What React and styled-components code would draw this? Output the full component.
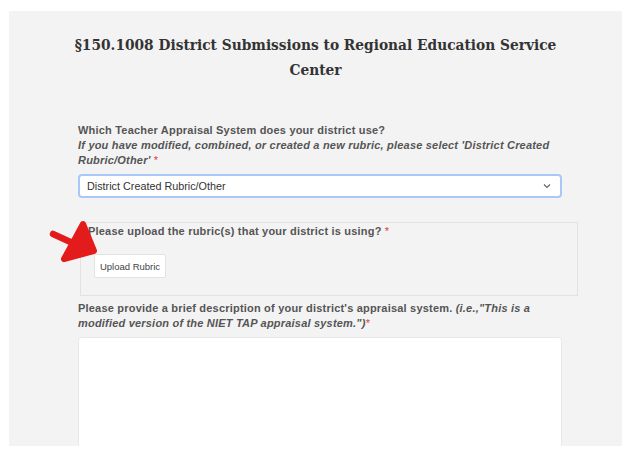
import React from 'react';
import styled, { createGlobalStyle } from 'styled-components';

const GlobalStyle = createGlobalStyle`
  body {
    margin: 0;
    background: #fff;
    font-family: "Liberation Sans", Arial, sans-serif;
  }
`;

const Panel = styled.div`
  margin: 11px 0 0 9px;
  width: 613px;
  height: 435px;
  background: #f3f3f3;
  box-sizing: border-box;
  padding-top: 22px;
  overflow: hidden;
`;

const Title = styled.h1`
  margin: 0 auto;
  width: 500px;
  font-family: "DejaVu Serif Condensed", "DejaVu Serif", serif;
  font-size: 15.3px;
  font-weight: bold;
  line-height: 25px;
  color: #333;
  text-align: center;
`;

const Form = styled.form`
  margin: 40px 0 0 69px;
  width: 484px;
  display: flex;
  flex-direction: column;
`;

const Label = styled.div`
  font-size: 11px;
  font-weight: bold;
  line-height: 15px;
  letter-spacing: 0.2px;
  color: #555;
`;

const Hint = styled.i`
  color: #555;
`;

const Req = styled.span`
  color: #e8363c;
  font-weight: normal;
`;

const SelectBox = styled.div`
  margin-top: 6px;
  height: 24px;
  box-sizing: border-box;
  border: 2px solid #a9c8f7;
  border-radius: 4px;
  background: #fff;
  display: flex;
  align-items: center;
  justify-content: space-between;
  padding: 0 9px 0 7px;
  font-size: 10.8px;
  color: #333;
`;

const UploadBox = styled.div`
  position: relative;
  margin: 24px 0 0 2px;
  width: 498px;
  height: 74px;
  box-sizing: border-box;
  border: 1px solid #e2e2e2;
  padding: 1px 7px;
`;

const UploadButton = styled.button`
  margin: 15px 0 0 6px;
  height: 24px;
  width: 72px;
  background: #fff;
  border: 1px solid #e3e3e3;
  border-radius: 2px;
  font-family: "Liberation Sans", Arial, sans-serif;
  font-size: 9.5px;
  color: #444;
  padding: 0;
`;

const Arrow = styled.svg`
  position: absolute;
  left: -32px;
  top: -3px;
`;

const DescLabel = styled(Label)`
  margin-top: 5px;
`;

const TextArea = styled.div`
  margin-top: 6px;
  height: 140px;
  background: #fff;
  border: 1px solid #e8e8e8;
  border-radius: 3px;
`;

export default function App() {
  return (
    <>
      <GlobalStyle />
      <Panel>
        <Title>§150.1008 District Submissions to Regional Education Service Center</Title>
        <Form>
          <Label>
            Which Teacher Appraisal System does your district use?
            <br />
            <Hint>If you have modified, combined, or created a new rubric, please select 'District Created Rubric/Other'</Hint> <Req>*</Req>
          </Label>
          <SelectBox>
            <span>District Created Rubric/Other</span>
            <svg width="8" height="6" viewBox="0 0 8 6">
              <polyline points="1,1.5 4,4.5 7,1.5" fill="none" stroke="#666" strokeWidth="1.2" />
            </svg>
          </SelectBox>
          <UploadBox>
            <Arrow width="50" height="44" viewBox="0 0 50 44">
              <line x1="4" y1="14" x2="28" y2="25" stroke="#e41b1b" strokeWidth="6.5" strokeLinecap="round" />
              <polygon points="34,4 15,39 45,31" fill="#e41b1b" stroke="#e41b1b" strokeWidth="6" strokeLinejoin="round" />
            </Arrow>
            <Label>
              Please upload the rubric(s) that your district is using? <Req>*</Req>
            </Label>
            <UploadButton type="button">Upload Rubric</UploadButton>
          </UploadBox>
          <DescLabel>
            Please provide a brief description of your district's appraisal system. <Hint>(i.e.,"This is a modified version of the NIET TAP appraisal system.")</Hint><Req>*</Req>
          </DescLabel>
          <TextArea />
        </Form>
      </Panel>
    </>
  );
}
